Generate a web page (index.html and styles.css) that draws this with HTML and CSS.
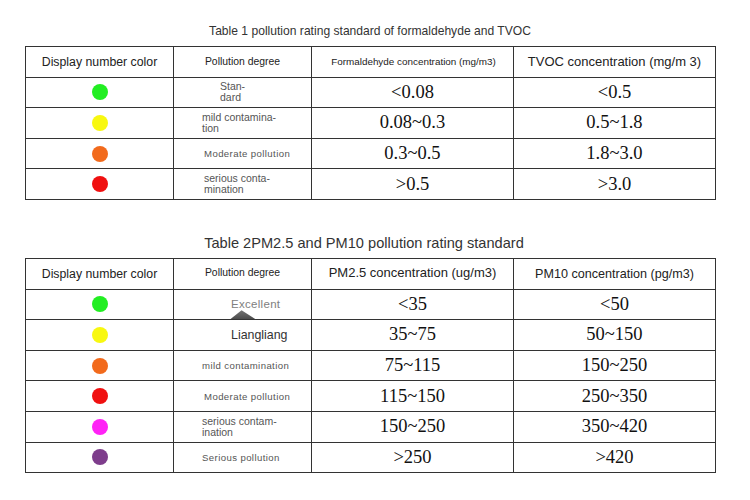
FILE: index.html
```html
<!DOCTYPE html>
<html lang="en">
<head>
<meta charset="utf-8">
<title>Pollution rating standards</title>
<link rel="stylesheet" href="styles.css">
</head>
<body>
<div class="page">
  <div class="title t1">Table 1 pollution rating standard of formaldehyde and TVOC</div>
  <table class="grid g1">
    <colgroup><col class="c1"><col class="c2"><col class="c3"><col class="c4"></colgroup>
    <tr class="head">
      <td class="h-color">Display number color</td>
      <td class="h-deg">Pollution degree</td>
      <td class="h-form">Formaldehyde concentration (mg/m3)</td>
      <td class="h-tvoc">TVOC concentration (mg/m 3)</td>
    </tr>
    <tr>
      <td><span class="dot green"></span></td>
      <td class="deg"><div class="two p-std">Stan-<br>dard</div></td>
      <td class="val">&lt;0.08</td>
      <td class="val">&lt;0.5</td>
    </tr>
    <tr>
      <td><span class="dot yellow"></span></td>
      <td class="deg"><div class="two p-a">mild contamina-<br>tion</div></td>
      <td class="val">0.08~0.3</td>
      <td class="val">0.5~1.8</td>
    </tr>
    <tr>
      <td><span class="dot orange"></span></td>
      <td class="deg"><div class="one p-b">Moderate pollution</div></td>
      <td class="val">0.3~0.5</td>
      <td class="val">1.8~3.0</td>
    </tr>
    <tr>
      <td><span class="dot red"></span></td>
      <td class="deg"><div class="two p-b">serious conta-<br>mination</div></td>
      <td class="val">&gt;0.5</td>
      <td class="val">&gt;3.0</td>
    </tr>
  </table>

  <div class="title t2">Table 2PM2.5 and PM10 pollution rating standard</div>
  <table class="grid g2">
    <colgroup><col class="c1"><col class="c2"><col class="c3"><col class="c4"></colgroup>
    <tr class="head">
      <td class="h-color">Display number color</td>
      <td class="h-deg up">Pollution degree</td>
      <td class="h-pm25">PM2.5 concentration (ug/m3)</td>
      <td class="h-pm10">PM10 concentration (pg/m3)</td>
    </tr>
    <tr>
      <td><span class="dot green"></span></td>
      <td class="deg smudge-cell"><div class="one p-ex excellent">Excellent</div><span class="smudge"></span></td>
      <td class="val">&lt;35</td>
      <td class="val">&lt;50</td>
    </tr>
    <tr>
      <td><span class="dot yellow"></span></td>
      <td class="deg"><div class="one p-ex liang">Liangliang</div></td>
      <td class="val">35~75</td>
      <td class="val">50~150</td>
    </tr>
    <tr>
      <td><span class="dot orange"></span></td>
      <td class="deg"><div class="one p-a">mild contamination</div></td>
      <td class="val">75~115</td>
      <td class="val">150~250</td>
    </tr>
    <tr>
      <td><span class="dot red"></span></td>
      <td class="deg"><div class="one p-b">Moderate pollution</div></td>
      <td class="val">115~150</td>
      <td class="val">250~350</td>
    </tr>
    <tr>
      <td><span class="dot magenta"></span></td>
      <td class="deg"><div class="two p-a">serious contam-<br>ination</div></td>
      <td class="val">150~250</td>
      <td class="val">350~420</td>
    </tr>
    <tr>
      <td><span class="dot purple"></span></td>
      <td class="deg"><div class="one p-a">Serious pollution</div></td>
      <td class="val">&gt;250</td>
      <td class="val">&gt;420</td>
    </tr>
  </table>
</div>
</body>
</html>
```

FILE: styles.css
```css
html, body {
  margin: 0;
  padding: 0;
  background: #ffffff;
}

.page {
  width: 690px;
  padding-left: 25px;
  font-family: "Liberation Sans", Arial, sans-serif;
  color: #222;
}

.title {
  text-align: center;
  color: #333;
}

.t1 {
  font-size: 12.1px;
  line-height: 16px;
  margin-top: 23px;
  margin-bottom: 7px;
}

.t2 {
  font-size: 14.6px;
  line-height: 18px;
  margin-top: 34px;
  margin-bottom: 6px;
  padding-right: 12px;
}

.grid {
  border-collapse: collapse;
  table-layout: fixed;
  width: 690px;
}

.c1 { width: 148px; }
.c2 { width: 138px; }
.c3 { width: 202px; }
.c4 { width: 202px; }

.grid td {
  border: 1px solid #333;
  padding: 0;
  text-align: center;
  vertical-align: middle;
  box-sizing: border-box;
}

.g1 td {
  height: 30.6px;
}

.g2 td {
  height: 30.6px;
}

.head td {
  color: #222;
}

.h-color { font-size: 12.3px; }
.h-deg { font-size: 10.4px; }
.h-form { font-size: 9.9px; padding-left: 2px !important; }
.h-tvoc { font-size: 13px; }
.h-pm25 { font-size: 13px; padding-bottom: 3px !important; }
.h-pm10 { font-size: 12.6px; padding-top: 1px !important; }
.up { padding-bottom: 3px !important; }

.dot {
  display: block;
  width: 16px;
  height: 16px;
  border-radius: 50%;
  margin: 0 auto;
}

.green { background: #22ee22; }
.yellow { background: #f8f810; }
.orange { background: #f26a1c; }
.red { background: #f01010; }
.magenta { background: #ff22f6; }
.purple { background: #7e3d8c; }

.deg {
  text-align: left !important;
  color: #555;
}

.two {
  font-size: 10.5px;
  line-height: 11px;
  color: #555;
}

.one {
  font-size: 9.6px;
  line-height: 11px;
  letter-spacing: 0.4px;
  color: #555;
}

.p-std { padding-left: 46px; }
.p-a { padding-left: 28px; }
.p-b { padding-left: 30px; }
.p-ex { padding-left: 57px; }

.excellent {
  font-size: 11.5px;
  letter-spacing: 0.3px;
  color: #808080;
}

.liang {
  font-size: 12.4px;
  line-height: 14px;
  color: #333;
  letter-spacing: 0;
}

.val {
  font-family: "Liberation Serif", "Times New Roman", serif;
  font-size: 18.5px;
  color: #111;
}

.smudge-cell {
  position: relative;
}

.smudge {
  position: absolute;
  left: 55px;
  bottom: -1px;
  width: 28px;
  height: 10px;
  background: linear-gradient(to bottom, #666, #333);
  clip-path: polygon(45% 0, 100% 100%, 0 100%);
  opacity: 0.9;
}
```
